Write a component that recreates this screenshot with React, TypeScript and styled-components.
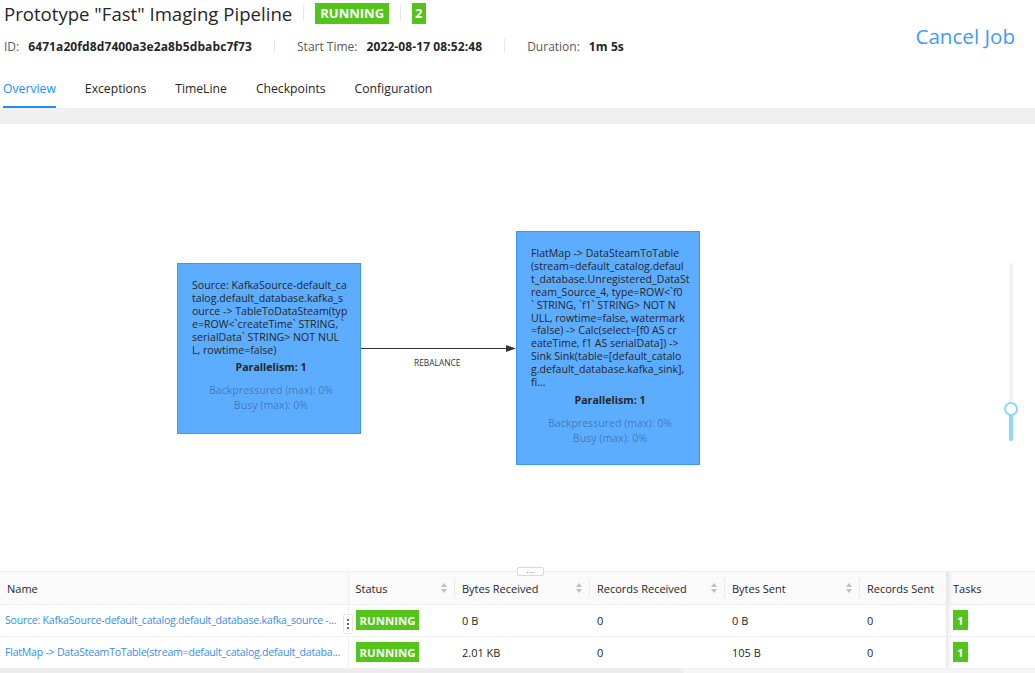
import React from "react";
import styled, { createGlobalStyle } from "styled-components";

const GlobalStyle = createGlobalStyle`
    html, body {
        margin: 0;
        padding: 0;
        background: #fff;
        font-family: "Open Sans", "Noto Sans", sans-serif;
        color: rgba(0, 0, 0, 0.85);
    }
    * { box-sizing: border-box; }
`;

const Page = styled.div`
    width: 1035px;
    height: 673px;
    overflow: hidden;
    display: flex;
    flex-direction: column;
`;

const Header = styled.div`
    display: flex;
    justify-content: space-between;
    padding: 0 20px 0 4px;
    height: 66px;
    flex-shrink: 0;
`;

const HeaderLeft = styled.div`
    display: flex;
    flex-direction: column;
`;

const TitleRow = styled.div`
    display: flex;
    align-items: center;
    height: 26px;
`;

const Title = styled.h1`
    margin: 0;
    font-size: 18.6px;
    font-weight: 400;
    color: #262626;
    white-space: nowrap;
`;

const Divider = styled.span<{ $h?: number; $gap?: number }>`
    display: inline-block;
    width: 1px;
    height: ${(p) => p.$h || 16}px;
    background: #e8e8e8;
    margin: 0 ${(p) => p.$gap || 11}px;
`;

const Badge = styled.span<{ $size?: number; $pad?: number; $h?: number }>`
    display: inline-flex;
    align-items: center;
    justify-content: center;
    background: #52c41a;
    color: #fff;
    font-weight: 700;
    font-size: ${(p) => p.$size || 12}px;
    height: ${(p) => p.$h || 20}px;
    padding: 0 ${(p) => (p.$pad !== undefined ? p.$pad : 5)}px;
    white-space: nowrap;
    vertical-align: middle;
`;

const MetaRow = styled.div`
    display: flex;
    align-items: center;
    height: 20px;
    margin-top: 10px;
    font-size: 12px;
    white-space: nowrap;
`;

const MetaLabel = styled.span`
    color: #595959;
    margin-right: 9px;
`;

const MetaValue = styled.span`
    font-weight: 700;
    color: #262626;
    letter-spacing: 0.1px;
`;

const CancelJob = styled.a`
    font-size: 20.6px;
    color: #3f9bff;
    margin-top: 22px;
    cursor: pointer;
    white-space: nowrap;
`;

const TabBar = styled.div`
    display: flex;
    gap: 29px;
    padding-left: 3px;
    height: 42px;
    flex-shrink: 0;
    align-items: stretch;
`;

const Tab = styled.div<{ $active?: boolean }>`
    display: flex;
    align-items: center;
    padding-top: 5px;
    font-size: 12.2px;
    color: ${(p) => (p.$active ? "#1890ff" : "#262626")};
    border-bottom: 2px solid ${(p) => (p.$active ? "#1890ff" : "transparent")};
    white-space: nowrap;
`;

const Band = styled.div`
    height: 16px;
    flex-shrink: 0;
    background: #f0f0f0;
`;

const Canvas = styled.div`
    position: relative;
    height: 442px;
    flex-shrink: 0;
    background: #fff;
`;

const Node = styled.div<{ $x: number; $y: number; $h: number }>`
    position: absolute;
    left: ${(p) => p.$x}px;
    top: ${(p) => p.$y}px;
    width: 184px;
    height: ${(p) => p.$h}px;
    background: #5cadff;
    border: 1px solid #3d96f0;
    padding: 15px 10px 0 14px;
    font-size: 10.6px;
    line-height: 12.9px;
    color: #262626;
`;

const NodeLine = styled.div`
    white-space: nowrap;
`;

const Parallelism = styled.div`
    text-align: center;
    font-weight: 700;
    margin-top: 3px;
    line-height: 16px;
`;

const Metric = styled.div<{ $first?: boolean }>`
    text-align: center;
    color: rgba(0, 0, 0, 0.32);
    margin-top: ${(p) => (p.$first ? 9 : 2)}px;
    line-height: 13px;
`;

const EdgeLayer = styled.svg`
    position: absolute;
    left: 0;
    top: 0;
    pointer-events: none;
`;

const EdgeLabel = styled.div`
    position: absolute;
    left: 414px;
    top: 233px;
    font-size: 8.4px;
    color: #333;
`;

const SliderTrack = styled.div`
    position: absolute;
    left: 1009px;
    top: 139px;
    width: 4px;
    height: 178px;
    border-radius: 2px;
    background: #f2f2f2;
`;

const SliderFill = styled.div`
    position: absolute;
    left: 0;
    bottom: 0;
    width: 4px;
    height: 32px;
    border-radius: 2px;
    background: #91d5ff;
`;

const SliderHandle = styled.div`
    position: absolute;
    left: -5px;
    bottom: 25px;
    width: 14px;
    height: 14px;
    border-radius: 50%;
    background: #fff;
    border: 2px solid #91d5ff;
`;

const TableWrap = styled.div`
    position: relative;
    border-top: 1px solid #f0f0f0;
    margin-top: 5px;
    flex-shrink: 0;
`;

const ResizeTab = styled.div`
    position: absolute;
    left: 517px;
    top: -5px;
    width: 27px;
    height: 9px;
    background: #fff;
    border: 1px solid #d9d9d9;
    border-radius: 2px;
    font-size: 8px;
    line-height: 3px;
    text-align: center;
    color: #555;
    letter-spacing: 0.5px;
    z-index: 2;
`;

const Table = styled.table`
    width: 1035px;
    border-collapse: collapse;
    table-layout: fixed;
    font-size: 11px;
`;

const Th = styled.th<{ $fixedLeft?: boolean; $fixedRight?: boolean; $noSep?: boolean }>`
    position: relative;
    height: 32px;
    background: #fafafa;
    text-align: left;
    font-weight: 400;
    color: #262626;
    padding: 1px 7px 0 7px;
    border-bottom: 1px solid #f0f0f0;
    border-right: ${(p) => (p.$fixedLeft ? "1px solid #f0f0f0" : "none")};
    box-shadow: ${(p) => (p.$fixedRight ? "inset 8px 0 6px -6px rgba(0,0,0,0.12)" : "none")};
    white-space: nowrap;
    &::before {
        content: "";
        display: ${(p) => (p.$noSep || p.$fixedRight || p.$fixedLeft ? "none" : "block")};
        position: absolute;
        right: 0;
        top: 50%;
        transform: translateY(-50%);
        width: 1px;
        height: 20px;
        background: rgba(0, 0, 0, 0.06);
    }
`;

const ThInner = styled.div`
    display: flex;
    align-items: center;
    justify-content: space-between;
`;

const Td = styled.td<{ $fixedLeft?: boolean; $fixedRight?: boolean }>`
    height: 32px;
    padding: 0 7px;
    border-bottom: 1px solid #f0f0f0;
    border-right: ${(p) => (p.$fixedLeft ? "1px solid #f0f0f0" : "none")};
    box-shadow: ${(p) => (p.$fixedRight ? "inset 8px 0 6px -6px rgba(0,0,0,0.12)" : "none")};
    color: #262626;
    white-space: nowrap;
`;

const NameLink = styled.a`
    display: block;
    color: #3a8ee6;
    cursor: pointer;
    font-size: 10.6px;
    letter-spacing: -0.25px;
    white-space: nowrap;
    margin-left: -2px;
`;

const ColHandle = styled.div`
    position: absolute;
    left: 343px;
    top: 42px;
    width: 10px;
    height: 20px;
    background: #fff;
    border: 1px solid #e6e6e6;
    border-radius: 2px;
    display: flex;
    flex-direction: column;
    align-items: center;
    justify-content: center;
    gap: 2px;
    z-index: 2;
`;

const Dot = styled.span`
    width: 2px;
    height: 2px;
    border-radius: 50%;
    background: #333;
`;

const ScrollBar = styled.div`
    height: 5px;
    background: #f5f5f5;
`;

const ScrollThumb = styled.div`
    width: 683px;
    height: 5px;
    background: #ececec;
`;

const SortIcon = () => (
    <svg width="8" height="12" viewBox="0 0 8 12">
        <path d="M4 1 L7 5 L1 5 Z" fill="#bfbfbf" />
        <path d="M4 11 L7 7 L1 7 Z" fill="#bfbfbf" />
    </svg>
);

const node1Lines = [
    "Source: KafkaSource-default_ca",
    "talog.default_database.kafka_s",
    "ource -> TableToDataSteam(typ",
    "e=ROW<`createTime` STRING, `",
    "serialData` STRING> NOT NUL",
    "L, rowtime=false)",
];

const node2Lines = [
    "FlatMap -> DataSteamToTable",
    "(stream=default_catalog.defaul",
    "t_database.Unregistered_DataSt",
    "ream_Source_4, type=ROW<`f0",
    "` STRING, `f1` STRING> NOT N",
    "ULL, rowtime=false, watermark",
    "=false) -> Calc(select=[f0 AS cr",
    "eateTime, f1 AS serialData]) ->",
    "Sink Sink(table=[default_catalo",
    "g.default_database.kafka_sink],",
    "fi...",
];

// names are shown already cut to the column width
const vertices = [
    {
        name: "Source: KafkaSource-default_catalog.default_database.kafka_source -...",
        bytesIn: "0 B",
        recIn: "0",
        bytesOut: "0 B",
        recOut: "0",
    },
    {
        name: "FlatMap -> DataSteamToTable(stream=default_catalog.default_databa...",
        bytesIn: "2.01 KB",
        recIn: "0",
        bytesOut: "105 B",
        recOut: "0",
    },
];

type NodeProps = { x: number; y: number; h: number; lines: string[] };

const GraphNode = (props: NodeProps) => (
    <Node $x={props.x} $y={props.y} $h={props.h}>
        {props.lines.map((l, i) => <NodeLine key={i}>{l}</NodeLine>)}
        <Parallelism>Parallelism: 1</Parallelism>
        <Metric $first>Backpressured (max): 0%</Metric>
        <Metric>Busy (max): 0%</Metric>
    </Node>
);

const App = () => {
    return (
        <Page>
            <GlobalStyle />
            <Header>
                <HeaderLeft>
                    <TitleRow>
                        <Title>Prototype "Fast" Imaging Pipeline</Title>
                        <Divider />
                        <Badge $size={13} $h={21} $pad={5}>RUNNING</Badge>
                        <Divider />
                        <Badge $size={13} $h={21} $pad={3}>2</Badge>
                    </TitleRow>
                    <MetaRow>
                        <MetaLabel>ID:</MetaLabel>
                        <MetaValue>6471a20fd8d7400a3e2a8b5dbabc7f73</MetaValue>
                        <Divider $h={14} $gap={22} />
                        <MetaLabel>Start Time:</MetaLabel>
                        <MetaValue>2022-08-17 08:52:48</MetaValue>
                        <Divider $h={14} $gap={22} />
                        <MetaLabel>Duration:</MetaLabel>
                        <MetaValue>1m 5s</MetaValue>
                    </MetaRow>
                </HeaderLeft>
                <CancelJob>Cancel Job</CancelJob>
            </Header>
            <TabBar>
                <Tab $active>Overview</Tab>
                <Tab>Exceptions</Tab>
                <Tab>TimeLine</Tab>
                <Tab>Checkpoints</Tab>
                <Tab>Configuration</Tab>
            </TabBar>
            <Band />
            <Canvas>
                <GraphNode x={177} y={139} h={171} lines={node1Lines} />
                <GraphNode x={516} y={107} h={234} lines={node2Lines} />
                <EdgeLayer width="1035" height="442">
                    <line x1="361" y1="224.5" x2="508" y2="224.5" stroke="#333" strokeWidth="1" />
                    <path d="M516 224.5 L506 221 L506 228 Z" fill="#333" />
                </EdgeLayer>
                <EdgeLabel>REBALANCE</EdgeLabel>
                <SliderTrack>
                    <SliderFill />
                    <SliderHandle />
                </SliderTrack>
            </Canvas>
            <TableWrap>
                <ResizeTab>...</ResizeTab>
                <ColHandle>
                    <Dot />
                    <Dot />
                    <Dot />
                </ColHandle>
                <Table>
                    <colgroup>
                        <col style={{ width: 348 }} />
                        <col style={{ width: 107 }} />
                        <col style={{ width: 135 }} />
                        <col style={{ width: 135 }} />
                        <col style={{ width: 135 }} />
                        <col style={{ width: 86 }} />
                        <col style={{ width: 89 }} />
                    </colgroup>
                    <thead>
                        <tr>
                            <Th $fixedLeft>Name</Th>
                            <Th>
                                <ThInner>Status<SortIcon /></ThInner>
                            </Th>
                            <Th>
                                <ThInner>Bytes Received<SortIcon /></ThInner>
                            </Th>
                            <Th>
                                <ThInner>Records Received<SortIcon /></ThInner>
                            </Th>
                            <Th>
                                <ThInner>Bytes Sent<SortIcon /></ThInner>
                            </Th>
                            <Th $noSep>Records Sent</Th>
                            <Th $fixedRight>Tasks</Th>
                        </tr>
                    </thead>
                    <tbody>
                        {vertices.map((v, i) => (
                            <tr key={i}>
                                <Td $fixedLeft>
                                    <NameLink>{v.name}</NameLink>
                                </Td>
                                <Td>
                                    <Badge $size={11.4} $h={20} $pad={4}>RUNNING</Badge>
                                </Td>
                                <Td>{v.bytesIn}</Td>
                                <Td>{v.recIn}</Td>
                                <Td>{v.bytesOut}</Td>
                                <Td>{v.recOut}</Td>
                                <Td $fixedRight>
                                    <Badge $size={11.4} $h={20} $pad={4}>1</Badge>
                                </Td>
                            </tr>
                        ))}
                    </tbody>
                </Table>
                <ScrollBar>
                    <ScrollThumb />
                </ScrollBar>
            </TableWrap>
        </Page>
    );
};

export default App;
